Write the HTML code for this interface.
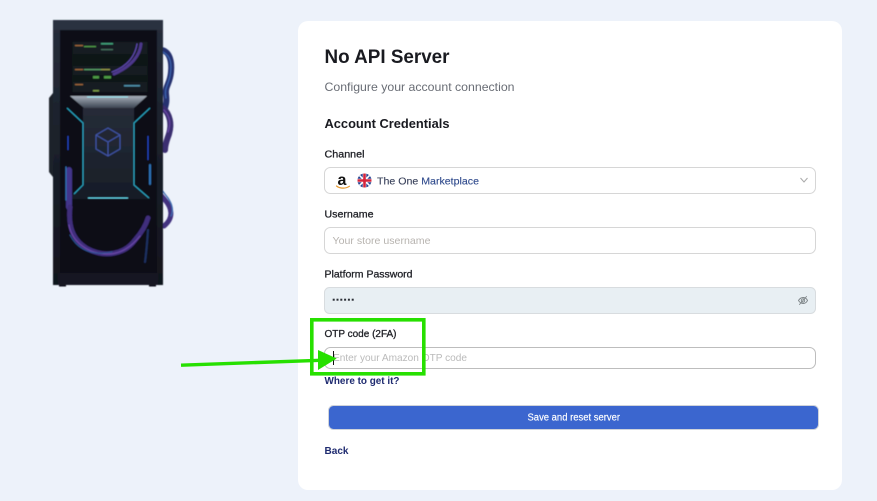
<!DOCTYPE html>
<html lang="en"><head><meta charset="utf-8"><title>No API Server</title>
<style>
html,body{margin:0;padding:0;width:877px;height:501px;overflow:hidden;background:#edf2fa}
svg{position:absolute;left:0;top:0;display:block}
text{font-family:"Liberation Sans",sans-serif}
.l{font-size:10.5px;fill:#1f2026;stroke:#1f2026;stroke-width:.3px}
</style></head>
<body>
<svg width="877" height="501" viewBox="0 0 877 501" xmlns="http://www.w3.org/2000/svg">
<defs>
<linearGradient id="rack" x1="0" y1="0" x2="0" y2="1"><stop offset="0" stop-color="#262d3a"/><stop offset=".45" stop-color="#1b212b"/><stop offset="1" stop-color="#11151d"/></linearGradient>
<linearGradient id="panel" x1="0" y1="0" x2="0" y2="1"><stop offset="0" stop-color="#262c38"/><stop offset="1" stop-color="#171d27"/></linearGradient>
<linearGradient id="hood" x1="0" y1="0" x2="0" y2="1"><stop offset="0" stop-color="#a5aeb9"/><stop offset="1" stop-color="#3d4552"/></linearGradient>
<filter id="gl" x="-30%" y="-300%" width="160%" height="700%"><feGaussianBlur stdDeviation="1.2"/></filter>
<filter id="s" x="-10%" y="-10%" width="120%" height="120%"><feGaussianBlur stdDeviation=".45"/></filter>
</defs>

<!-- server rack -->
<g filter="url(#s)">
<g fill="none" stroke-linecap="round">
<path d="M162 50C170 52 172 62 171 72C170 84 165 86 166 94C167 102 166 104 165 108" stroke="#25336f" stroke-width="6"/>
<path d="M163 52C171 56 172 64 170 76C168 86 164 88 166 98" stroke="#3a63b0" stroke-width="1.2"/>
<path d="M163 108C170 114 172 124 169 134C167 140 165 144 165 150" stroke="#3a2e70" stroke-width="6"/>
<path d="M164 110C170 116 171 124 168 132" stroke="#6a47a8" stroke-width="1.2"/>
<path d="M148 166C149 182 158 192 165 200C172 208 174 218 164 226" stroke="#42307f" stroke-width="5"/>
<path d="M152 165C153 178 160 188 168 198C172 204 174 210 171 216" stroke="#3c6bb0" stroke-width="1.3"/>
</g>
<rect x="53" y="20" width="110" height="265" fill="url(#rack)"/>
<path d="M53 93L49 98V172L53 177Z" fill="#1b212b"/>
<rect x="60" y="29" width="97" height="246" fill="#0b0e15"/>
<rect x="53" y="20" width="110" height="10" fill="#2a3140"/>
<rect x="72" y="42" width="76" height="50" fill="#0f1419"/>
<rect x="73" y="42" width="74" height="12" fill="#151c23"/>
<rect x="73" y="66" width="74" height="9" fill="#141b20"/>
<rect x="73" y="82" width="74" height="10" fill="#141b20"/>
<rect x="101" y="43" width="12" height="1.500" fill="#3f9f79"/>
<rect x="84" y="46" width="12" height="1.200" fill="#53a04b"/>
<rect x="101" y="49" width="12" height="1.200" fill="#47745e"/>
<rect x="84" y="69" width="17" height="1.200" fill="#5ca56a"/>
<rect x="101" y="69" width="9" height="1.200" fill="#9ba14b"/>
<rect x="93" y="76" width="6" height="2.500" fill="#4d9a45"/>
<rect x="104" y="76" width="7" height="2.500" fill="#4d9a45"/>
<rect x="124" y="85" width="16" height="1.500" fill="#4d8ea8"/>
<rect x="93" y="90" width="6" height="1.500" fill="#7a9a45"/>
<rect x="75" y="45" width="8" height="1.200" fill="#a56a3a"/>
<rect x="75" y="69" width="8" height="1.200" fill="#a56a3a"/>
<rect x="75" y="84" width="8" height="1.200" fill="#a56a3a"/>
<g fill="none" stroke-linecap="round">
<path d="M141 44C140 55 132 66 114 74" stroke="#4e388c" stroke-width="3"/>
<path d="M137 44C135 56 128 66 112 72" stroke="#5f4ab0" stroke-width="1.200"/>
</g>
<path d="M70 96H147L134 108H84Z" fill="url(#hood)"/>
<path d="M87 97H128" stroke="#5fd8f0" stroke-width="2" filter="url(#gl)"/>
<path d="M87 97H128" stroke="#9ceaf6" stroke-width="1"/>
<path d="M83 108H134V185L151 199H68L83 185Z" fill="url(#panel)"/>
<path d="M67 108L83 123V185L74 194" fill="none" stroke="#2fb4d4" stroke-width=".9"/>
<path d="M150 108L134 123V185L149 198" fill="none" stroke="#2fb4d4" stroke-width=".9"/>
<path d="M68 136V150M148 136V160" stroke="#2749c8" stroke-width="1"/>
<path d="M88 198H128" stroke="#45d3ea" stroke-width="2.400" filter="url(#gl)"/>
<path d="M88 198H128" stroke="#67dbee" stroke-width="1"/>
<path d="M66 200H152V270H66Z" fill="#0b0f15"/>
<g fill="none" stroke="#4054a8" stroke-width="1.100" stroke-linejoin="round">
<path d="M108 128L120 135V149L108 156L96 149V135Z"/>
<path d="M96 135L108 142L120 135M108 142V156"/>
</g>
<g fill="none" stroke-linecap="round">
<path d="M69 170V207" stroke="#43348a" stroke-width="6"/>
<path d="M66 167V200" stroke="#2f6fb4" stroke-width="1.300"/>
<path d="M70 207C68 225 72 240 88 249C105 258 125 254 135 240C142 232 146 225 148 218" stroke="#3f2e7c" stroke-width="5"/>
<path d="M69 225C72 242 88 254 108 254C122 254 132 246 140 236" stroke="#6a47a8" stroke-width="1.200"/>
<path d="M70 235C78 250 92 256 112 252" stroke="#2a5596" stroke-width="1"/>
<path d="M150 165V184" stroke="#2f6fb4" stroke-width="2"/>
<path d="M148 230C147 245 146 255 145 262" stroke="#1d3263" stroke-width="2"/>
</g>
<rect x="58" y="273" width="100" height="12" fill="#141821"/>
<rect x="59" y="285" width="7" height="1.500" fill="#0b0e13"/>
<rect x="149" y="285" width="7" height="1.500" fill="#0b0e13"/>
</g>

<!-- card -->
<rect x="298" y="21" width="544" height="469" rx="10" fill="#fff"/>

<!-- fields -->
<rect x="324.500" y="167.500" width="491" height="26" rx="6" fill="#fff" stroke="#d6d6d6"/>
<rect x="324.500" y="227.500" width="491" height="26" rx="6" fill="#fff" stroke="#d6d6d6"/>
<rect x="324.500" y="287.500" width="491" height="26" rx="5" fill="#e8eff3" stroke="#d8dcdf"/>
<rect x="324.500" y="347.500" width="491" height="21" rx="6" fill="#fff" stroke="#bdbdbd"/>
<rect x="328.500" y="405.500" width="490" height="24" rx="5" fill="#3b66cf" stroke="#cfd3da"/>

<!-- text -->
<text x="324.500" y="63" font-size="19" font-weight="700" fill="#191a20" textLength="125" lengthAdjust="spacingAndGlyphs">No API Server</text>
<text x="324.500" y="91" font-size="12" fill="#696d75" textLength="190" lengthAdjust="spacingAndGlyphs">Configure your account connection</text>
<text x="324.500" y="128" font-size="13" font-weight="700" fill="#191a20" textLength="125" lengthAdjust="spacingAndGlyphs">Account Credentials</text>
<text class="l" x="324.500" y="157.500" textLength="40" lengthAdjust="spacingAndGlyphs">Channel</text>
<text x="377" y="184.500" font-size="10.500" fill="#38405a" stroke="#38405a" stroke-width=".12" textLength="102" lengthAdjust="spacingAndGlyphs">The One <tspan fill="#2f4a8c" stroke="#2f4a8c">Marketplace</tspan></text>
<text class="l" x="324.500" y="217.500" textLength="49" lengthAdjust="spacingAndGlyphs">Username</text>
<text x="332.500" y="244" font-size="10.500" fill="#b7b3af" textLength="98" lengthAdjust="spacingAndGlyphs">Your store username</text>
<text class="l" x="324.500" y="277.500" textLength="88" lengthAdjust="spacingAndGlyphs">Platform Password</text>
<text class="l" x="324.500" y="337" textLength="72" lengthAdjust="spacingAndGlyphs">OTP code (2FA)</text>
<text x="333" y="361" font-size="10.500" fill="#bababa" textLength="134" lengthAdjust="spacingAndGlyphs">Enter your Amazon OTP code</text>
<text x="324.500" y="384" font-size="10.500" font-weight="700" fill="#1f2b70" textLength="75" lengthAdjust="spacingAndGlyphs">Where to get it?</text>
<text x="527.500" y="420.500" font-size="10" fill="#fff" stroke="#fff" stroke-width=".15" textLength="92.500" lengthAdjust="spacingAndGlyphs">Save and reset server</text>
<text x="324.500" y="454" font-size="10.500" font-weight="700" fill="#1f2b70" textLength="24" lengthAdjust="spacingAndGlyphs">Back</text>

<!-- amazon logo -->
<text x="337.500" y="185" font-size="16" font-weight="700" fill="#111">a</text>
<path d="M336.500 186C340 188.800 346 188.800 349.500 186.200" fill="none" stroke="#e79a2f" stroke-width="1.200" stroke-linecap="round"/>
<!-- UK flag -->
<clipPath id="fc"><circle cx="364.500" cy="180.500" r="7"/></clipPath>
<g clip-path="url(#fc)">
<rect x="357" y="173" width="15" height="15" fill="#27408f"/>
<path d="M357 173L372 188M372 173L357 188" stroke="#fff" stroke-width="1.600"/>
<path d="M364.500 173V188M357 180.500H372" stroke="#fff" stroke-width="3.600"/>
<path d="M364.500 173V188M357 180.500H372" stroke="#d5243c" stroke-width="2.600"/>
</g>
<!-- chevron -->
<path d="M800.500 178L804 182L807.500 178" fill="none" stroke="#a9a9a9" stroke-width="1"/>
<!-- password dots -->
<g fill="#2b2f36">
<rect x="332.700" y="298.700" width="2" height="2"/><rect x="336.500" y="298.700" width="2" height="2"/><rect x="340.300" y="298.700" width="2" height="2"/><rect x="344.100" y="298.700" width="2" height="2"/><rect x="347.900" y="298.700" width="2" height="2"/><rect x="351.700" y="298.700" width="2" height="2"/>
</g>
<!-- eye-off -->
<g fill="none" stroke="#7d8487" stroke-width=".9" stroke-linecap="round">
<path d="M798.500 300.500C801 296.500 805.500 296.500 807.500 300.500C805.500 304.500 801 304.500 798.500 300.500Z"/>
<circle cx="803" cy="300.500" r="1.700"/>
<path d="M799.500 304.500L806.500 296.500"/>
</g>
<!-- caret -->
<rect x="333" y="351" width="1" height="14" fill="#111"/>

<!-- green annotation -->
<rect x="311.800" y="319.800" width="112" height="54" fill="none" stroke="#27e000" stroke-width="3.600"/>
<path d="M181 365.200L320 360.300" stroke="#27e000" stroke-width="3.400"/>
<path d="M318 350L336.700 358.500L318 370Z" fill="#27e000"/>
</svg>
</body></html>
